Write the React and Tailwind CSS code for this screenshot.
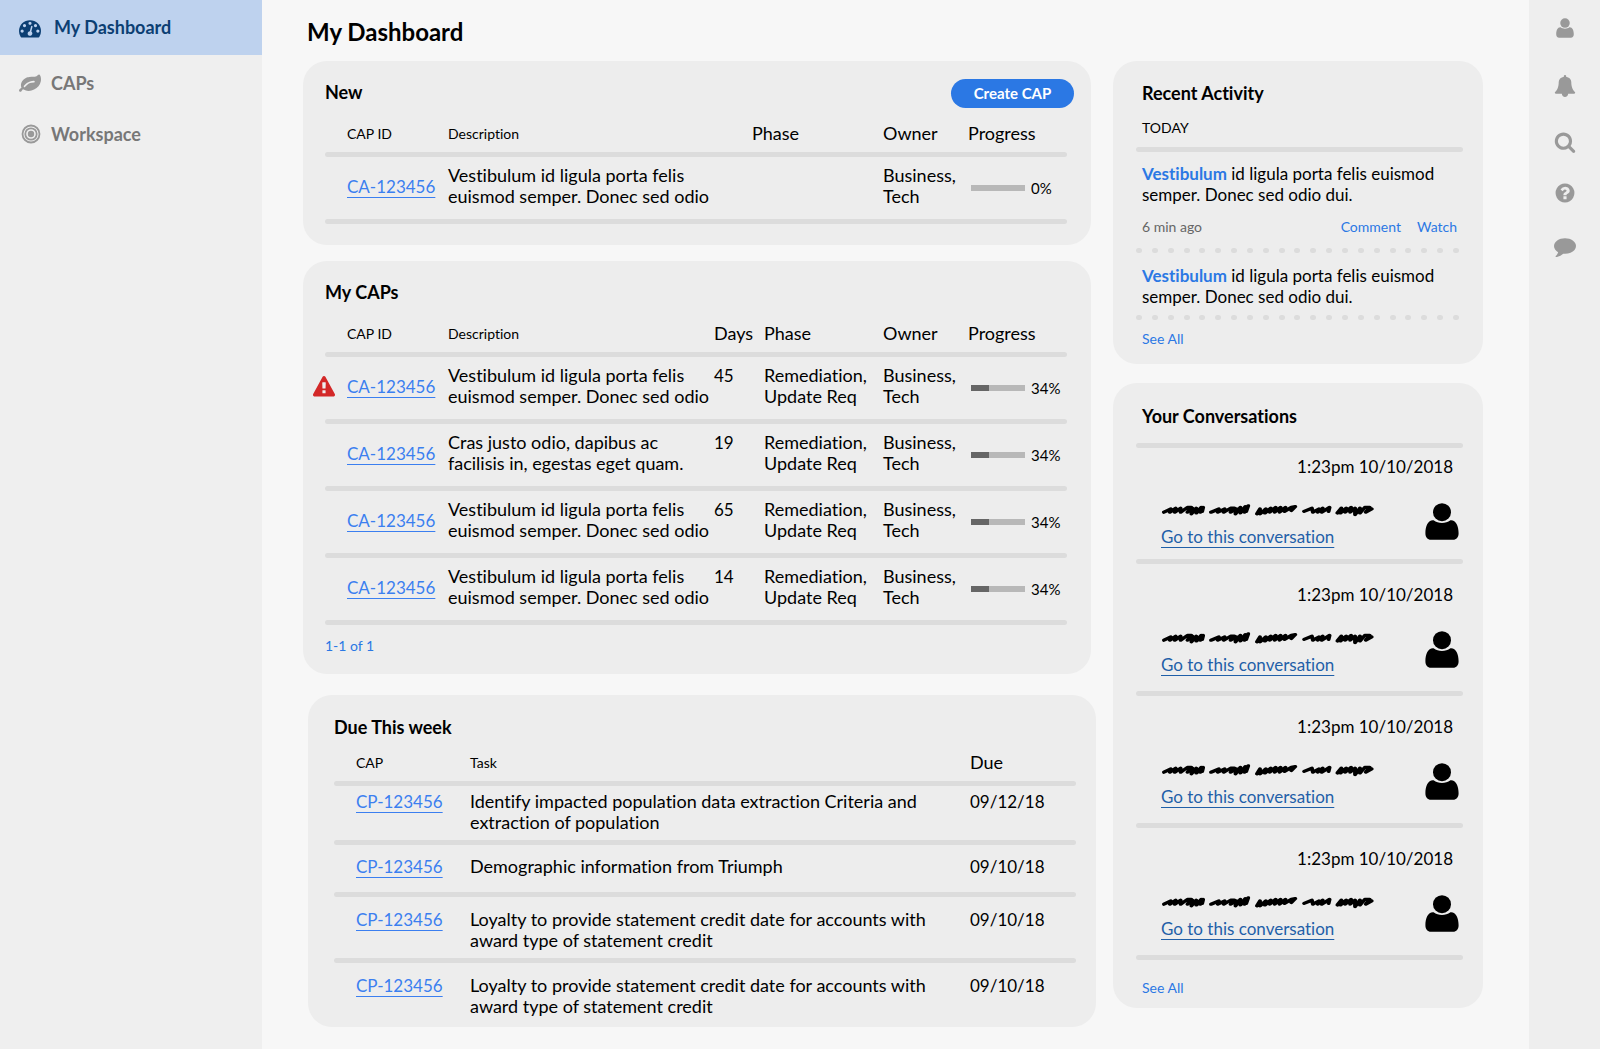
import React from 'react';

const ICONS = {
  dashboard: 'M384 1152q0-53-37.5-90.5t-90.5-37.5-90.5 37.5-37.5 90.5 37.5 90.5 90.5 37.5 90.5-37.5 37.5-90.5zm192-448q0-53-37.5-90.5t-90.5-37.5-90.5 37.5-37.5 90.5 37.5 90.5 90.5 37.5 90.5-37.5 37.5-90.5zm428 481l101-382q6-26-7.5-48.5t-38.5-29.5-48 6.5-30 39.5l-101 382q-60 5-107 43.5t-63 98.5q-20 77 20 146t117 89 146-20 89-117q16-60-6-117t-72-91zm660-33q0-53-37.5-90.5t-90.5-37.5-90.5 37.5-37.5 90.5 37.5 90.5 90.5 37.5 90.5-37.5 37.5-90.5zm-640-640q0-53-37.5-90.5t-90.5-37.5-90.5 37.5-37.5 90.5 37.5 90.5 90.5 37.5 90.5-37.5 37.5-90.5zm448 192q0-53-37.5-90.5t-90.5-37.5-90.5 37.5-37.5 90.5 37.5 90.5 90.5 37.5 90.5-37.5 37.5-90.5zm320 448q0 261-141 483-19 29-54 29h-1402q-35 0-54-29-141-221-141-483 0-182 71-348t191-286 286-191 348-71 348 71 286 191 191 286 71 348z',
  leaf: 'M1280 704q0-26-19-45t-45-19q-172 0-318 49.5t-259.5 134-235.5 219.5q-19 21-19 45 0 26 19 45t45 19q24 0 45-19 27-24 74-71t67-66q137-124 268.5-176t313.5-52q26 0 45-19t19-45zm512-198q0 95-20 193-46 224-184.5 383t-357.5 268q-214 108-438 108-148 0-286-47-15-5-88-42t-96-37q-16 0-39.5 32t-45 70-52.5 70-60 32q-43 0-63.5-17.5t-45.5-59.5q-2-4-6-11t-5.5-10-3-9.5-1.5-13.5q0-35 31-73.5t68-65.5 68-56 31-48q0-4-14-38t-16-44q-9-51-9-104 0-115 43.5-220t119-184.5 170.5-139 204-95.5q55-18 145-25.5t179.5-9 178.5-6 163.5-24 113.5-56.5l29.5-29.5 29.5-28 27-20 36.5-16 43.5-4.5q39 0 70.5 46t47.5 112 24 124 8 96z',
  bell: 'M1728 1408q0 52-38 90t-90 38h-448q0 106-75 181t-181 75-181-75-75-181h-448q-52 0-90-38t-38-90q50-42 91-88t85-119.500 74.500-158.500 50-206 19.500-260q0-152 117-282.500t307-158.500q-8-19-8-39 0-40 28-68t68-28 68 28 28 68q0 20-8 39 190 28 307 158.500t117 282.500q0 139 19.500 260t50 206 74.500 158.500 85 119.500 91 88z',
  search: 'M1216 832q0-185-131.5-316.5t-316.5-131.5-316.5 131.5-131.5 316.5 131.5 316.5 316.5 131.5 316.5-131.5 131.5-316.5zm512 832q0 52-38 90t-90 38q-54 0-90-38l-343-342q-179 124-399 124-143 0-273.5-55.5t-225-150-150-225-55.5-273.5 55.5-273.5 150-225 225-150 273.5-55.5 273.5 55.5 225 150 150 225 55.5 273.5q0 220-124 399l343 343q37 37 37 90z',
  question: 'M1024 1376v-192q0-14-9-23t-23-9h-192q-14 0-23 9t-9 23v192q0 14 9 23t23 9h192q14 0 23-9t9-23zm256-672q0-88-55.5-163t-138.5-116-170-41q-243 0-371 213-15 24 8 42l132 100q7 6 19 6 16 0 25-12 53-68 86-92 34-24 86-24 48 0 85.5 26t37.5 59q0 38-20 61t-68 45q-63 28-115.5 86.5t-52.5 125.5v36q0 14 9 23t23 9h192q14 0 23-9t9-23q0-19 21.5-49.5t54.5-49.5q32-18 49-28.5t46-35 44.5-48 28-60.5 12.5-81zm384 192q0 209-103 385.5t-279.5 279.5-385.5 103-385.5-103-279.5-279.5-103-385.5 103-385.5 279.5-279.5 385.5-103 385.5 103 279.5 279.5 103 385.5z',
  comment: 'M1792 896q0 174-120 321.5t-326 233-450 85.5q-70 0-145-8-198 175-460 242-49 14-114 22-17 2-30.5-9t-17.5-29v-1q-3-4-.5-12t2-10 4.5-9.5l6-9 7-8.5 8-9q7-8 31-34.5t34.5-38 31-39.5 32.5-51 27-59 26-76q-157-89-247.5-220t-90.5-281q0-130 71-248.5t191-204.5 286-136.5 348-50.5 348 50.5 286 136.5 191 204.5 71 248.5z',
  warning: 'M1024 1375v-190q0-14-9.5-23.5t-22.5-9.5h-192q-13 0-22.5 9.5t-9.5 23.5v190q0 14 9.5 23.5t22.5 9.5h192q13 0 22.5-9.5t9.5-23.5zm-2-374l18-459q0-12-10-19-13-11-24-11h-220q-11 0-24 11-10 7-10 21l17 457q0 10 10 16.5t24 6.5h185q14 0 23.5-6.5t10.5-16.5zm-14-934l768 1408q35 63-2 126-17 29-46.5 46t-63.5 17h-1536q-34 0-63.5-17t-46.5-46q-37-63-2-126l768-1408q17-31 47-49t65-18 65 18 47 49z',
};

const LOREM = 'Vestibulum id ligula porta felis euismod semper. Donec sed odio';

const newCaps = [
  { id: 'CA-123456', description: LOREM, phase: '', owner: ['Business,', 'Tech'], progress: 0 },
];

const myCaps = [
  { id: 'CA-123456', description: LOREM, days: 45, alert: true },
  { id: 'CA-123456', description: 'Cras justo odio, dapibus ac facilisis in, egestas eget quam.', days: 19 },
  { id: 'CA-123456', description: LOREM, days: 65 },
  { id: 'CA-123456', description: LOREM, days: 14 },
].map(c => ({ ...c, phase: ['Remediation,', 'Update Req'], owner: ['Business,', 'Tech'], progress: 34 }));

const dueTasks = [
  { id: 'CP-123456', task: 'Identify impacted population data extraction Criteria and extraction of population', due: '09/12/18', pad: 'pt-[5px] pb-[7px]' },
  { id: 'CP-123456', task: 'Demographic information from Triumph', due: '09/10/18', pad: 'pt-[11px] pb-[15px]' },
  { id: 'CP-123456', task: 'Loyalty to provide statement credit date for accounts with award type of statement credit', due: '09/10/18', pad: 'pt-[12px] pb-[7px]' },
  { id: 'CP-123456', task: 'Loyalty to provide statement credit date for accounts with award type of statement credit', due: '09/10/18', pad: 'pt-[12px]' },
];

function Icon({ name, className }) {
  return (
    <svg viewBox="0 0 1792 1792" fill="currentColor" className={className} aria-hidden="true">
      <path d={ICONS[name]} />
    </svg>
  );
}

function TargetIcon({ className }) {
  return (
    <svg viewBox="0 0 20 20" fill="none" stroke="currentColor" className={className} aria-hidden="true">
      <circle cx="10" cy="10" r="8.5" strokeWidth="1.8" />
      <circle cx="10" cy="10" r="5.7" strokeWidth="1.8" />
      <circle cx="10" cy="10" r="3.2" fill="currentColor" stroke="none" />
    </svg>
  );
}

function PersonIcon({ className }) {
  return (
    <svg viewBox="0 0 34 37" fill="currentColor" className={className} aria-hidden="true">
      <circle cx="17" cy="9.2" r="9" />
      <path d="M8.6 17.2c4.8 3.6 12 3.6 16.8 0 5.2-.6 8.2 5.4 8.2 13 0 4-2.2 6.5-5.5 6.5H5.9C2.6 36.7.4 34.2.4 30.2.4 22.6 3.4 16.6 8.6 17.2z" />
    </svg>
  );
}

// Placeholder handwriting standing in for the message preview
function Scribble() {
  return (
    <svg viewBox="0 0 216 14" fill="none" stroke="currentColor" strokeWidth="4" strokeLinecap="round" strokeLinejoin="round" className="w-[216px] h-[14px]" aria-hidden="true">
      <g transform="translate(0 2) scale(.98 .8)">
        <path d="M3 9l7-4-1 4 6-5-1 5 6-5 0 5 7-6 4 0-4 6 5-5-1 7 5-7 0 6 5-7-1 6 3-6-1 5" />
        <path d="M51 9l8-4-1 4 7-4-1 4 7-5 4 0-4 5 6-4-1 6 5-8 0 7 5-8-1 7 4-8-2 7" />
        <path d="M98 11l3-6 0 6 6-6-1 5 6-6-1 5 6-6-1 6 6-6-1 6 6-6-1 5 7-5 4-1-4 5" />
        <path d="M146 8l8-4 1 5 6-4-1 4 5-5-1 5 8-6-1 5" />
        <path d="M180 10l4-6-1 6 6-6-1 5 6-6-1 6 5-5 0 8 5-8 0 6 5-7 5 0-4 6 6-4" />
      </g>
    </svg>
  );
}

function Rule() {
  return <div className="h-[5px] rounded-full bg-[#dcdcdc]" />;
}

function RuleRow({ span }) {
  return (
    <tr aria-hidden="true">
      <td colSpan={span}><Rule /></td>
    </tr>
  );
}

function DottedRule() {
  return (
    <div className="flex justify-between pr-1" aria-hidden="true">
      {Array.from({ length: 21 }, (_, i) => (
        <span key={i} className="w-[6px] h-[5px] rounded-full bg-[#dcdcdc]" />
      ))}
    </div>
  );
}

function Card({ className = '', children }) {
  return <section className={`rounded-[24px] bg-[#ededed] ${className}`}>{children}</section>;
}

function CardTitle({ className = '', children }) {
  return <h2 className={`text-[18px] font-bold ${className}`}>{children}</h2>;
}

function CapTable({ rows, withDays }) {
  const cols = withDays ? 6 : 5;
  return (
    <table className="w-full table-fixed text-left text-[18px]">
      <colgroup>
        <col className="w-[123px]" />
        <col />
        {withDays && <col className="w-[50px]" />}
        <col className={withDays ? 'w-[119px]' : 'w-[131px]'} />
        <col className="w-[85px]" />
        <col className="w-[99px]" />
      </colgroup>
      <thead>
        <tr className="h-[29px] align-top">
          <th className="pl-[22px] text-[14px] font-normal">CAP ID</th>
          <th className="text-[14px] font-normal">Description</th>
          {withDays && <th className="font-normal">Days</th>}
          <th className="font-normal">Phase</th>
          <th className="font-normal">Owner</th>
          <th className="font-normal">Progress</th>
        </tr>
      </thead>
      <tbody>
        <RuleRow span={cols} />
        {rows.map((row, i) => (
          <React.Fragment key={i}>
            <tr className="h-[62px]">
              <td className="relative pl-[22px] pb-1 text-[17px]">
                {row.alert && <Icon name="warning" className="absolute -left-[12px] top-[19px] size-[22px] text-[#d32828]" />}
                <a href="#cap" className="text-[#3b7ff0] underline underline-offset-4">{row.id}</a>
              </td>
              <td className="pb-1">{row.description}</td>
              {withDays && <td className="pt-2 align-top text-[17px]">{row.days}</td>}
              <td className="pb-1">{row.phase && row.phase.map(p => <div key={p}>{p}</div>)}</td>
              <td className="pb-1">{row.owner.map(o => <div key={o}>{o}</div>)}</td>
              <td>
                <div className="flex items-center gap-[6px] pl-[3px] text-[15px]">
                  <div className="w-[54px] h-[6px] shrink-0 bg-[#b8b8b8]">
                    <div className="h-full bg-[#666]" style={{ width: `${row.progress}%` }} />
                  </div>
                  {row.progress}%
                </div>
              </td>
            </tr>
            <RuleRow span={cols} />
          </React.Fragment>
        ))}
      </tbody>
    </table>
  );
}

function Conversation({ first }) {
  return (
    <>
      <div className={`pl-[25px] ${first ? 'pt-2 pb-3' : 'pt-5 pb-4'}`}>
        <div className="pr-[10px] text-right">1:23pm 10/10/2018</div>
        <div className="mt-[26px] flex items-start justify-between pr-1">
          <div>
            <Scribble />
            <a href="#conversation" className="mt-[9px] block w-fit text-[#1f5fa8] underline underline-offset-4">Go to this conversation</a>
          </div>
          <PersonIcon className="w-[34px] h-[37px]" />
        </div>
      </div>
      <Rule />
    </>
  );
}

export default function App() {
  return (
    <div className="flex min-h-screen bg-[#f7f7f7] font-['Lato',sans-serif] text-[17px] leading-[21px] text-black [font-variant-ligatures:none]">
      {/* Left nav */}
      <nav className="w-[262px] shrink-0 bg-[#efefef] text-[18px] font-bold text-[#777]">
        <a href="#dashboard" className="flex h-[55px] items-center gap-[13px] bg-[#bed2ee] pl-[19px] text-[#0c3f73]">
          <Icon name="dashboard" className="size-[22px]" />
          My Dashboard
        </a>
        <a href="#caps" className="flex h-[57px] items-center gap-[10px] pl-[19px]">
          <Icon name="leaf" className="size-[22px] text-[#999]" />
          CAPs
        </a>
        <a href="#workspace" className="flex h-[44px] items-center gap-[10px] pl-[21px]">
          <TargetIcon className="size-[20px] text-[#999]" />
          Workspace
        </a>
      </nav>

      <main className="min-w-0 flex-1 pl-[41px] pr-[46px] pt-[18px]">
        <h1 className="pl-1 text-[24px] leading-[28px] font-bold">My Dashboard</h1>

        <div className="mt-[15px] grid grid-cols-[788fr_370fr] items-start gap-x-[22px]">
          <div>
            <Card className="pt-[18px] pr-[24px] pb-[21px] pl-[22px]">
              <div className="flex items-start justify-between">
                <CardTitle className="pt-[3px]">New</CardTitle>
                <button type="button" className="-mr-[7px] h-[29px] w-[123px] rounded-full bg-[#2b78e4] text-[15px] font-bold text-white">Create CAP</button>
              </div>
              <div className="mt-[15px]">
                <CapTable rows={newCaps} />
              </div>
            </Card>

            <Card className="mt-4 pt-[21px] pr-[24px] pb-[18px] pl-[22px]">
              <CardTitle className="mb-[20px]">My CAPs</CardTitle>
              <CapTable rows={myCaps} withDays />
              <a href="#page" className="mt-[10px] block w-fit text-[14px] text-[#2b78e4]">1-1 of 1</a>
            </Card>

            <Card className="mt-[21px] -mr-[5px] ml-[5px] pt-[22px] pr-[20px] pb-[10px] pl-[26px]">
              <CardTitle className="mb-[14px]">Due This week</CardTitle>
              <table className="w-full table-fixed text-left text-[18px]">
                <colgroup>
                  <col className="w-[136px]" />
                  <col />
                  <col className="w-[106px]" />
                </colgroup>
                <thead>
                  <tr className="h-[29px] align-top">
                    <th className="pl-[22px] text-[14px] font-normal">CAP</th>
                    <th className="text-[14px] font-normal">Task</th>
                    <th className="font-normal">Due</th>
                  </tr>
                </thead>
                <tbody>
                  {dueTasks.map((t, i) => (
                    <React.Fragment key={i}>
                      <RuleRow span={3} />
                      <tr className="align-top">
                        <td className={`pl-[22px] text-[17px] ${t.pad}`}>
                          <a href="#cap" className="text-[#3b7ff0] underline underline-offset-4">{t.id}</a>
                        </td>
                        <td className={t.pad}><div className="max-w-[480px]">{t.task}</div></td>
                        <td className={`text-[17px] ${t.pad}`}>{t.due}</td>
                      </tr>
                    </React.Fragment>
                  ))}
                </tbody>
              </table>
            </Card>
          </div>

          <div>
            <Card className="pt-[22px] pr-[20px] pb-[15px] pl-[23px]">
              <CardTitle className="pl-[6px]">Recent Activity</CardTitle>
              <div className="pl-[6px] pt-[13px] pb-[9px] text-[14px]">TODAY</div>
              <Rule />
              <p className="pl-[6px] pt-[11px]">
                <a href="#activity" className="font-bold text-[#2b78e4]">Vestibulum</a> id ligula porta felis euismod semper. Donec sed odio dui.
              </p>
              <div className="flex gap-4 pl-[6px] pr-[6px] pt-[11px] pb-[11px] text-[14px] text-[#2b78e4]">
                <span className="flex-1 text-[#666]">6 min ago</span>
                <a href="#comment">Comment</a>
                <a href="#watch">Watch</a>
              </div>
              <DottedRule />
              <p className="pl-[6px] pt-[12px] pb-[8px]">
                <a href="#activity" className="font-bold text-[#2b78e4]">Vestibulum</a> id ligula porta felis euismod semper. Donec sed odio dui.
              </p>
              <DottedRule />
              <a href="#activity" className="ml-[6px] mt-[8px] block w-fit text-[14px] text-[#2b78e4]">See All</a>
            </Card>

            <Card className="mt-[19px] pt-[23px] pr-[20px] pb-[10px] pl-[23px]">
              <CardTitle className="mb-[16px] pl-[6px]">Your Conversations</CardTitle>
              <Rule />
              <Conversation first />
              <Conversation />
              <Conversation />
              <Conversation />
              <a href="#conversations" className="ml-[6px] mt-[17px] block w-fit text-[14px] text-[#2b78e4]">See All</a>
            </Card>
          </div>
        </div>
      </main>

      {/* Right toolbar */}
      <aside className="flex w-[71px] shrink-0 flex-col items-center bg-[#eee] pt-[18px] text-[#999]">
        <button type="button" aria-label="Profile"><PersonIcon className="w-[18px] h-[20px]" /></button>
        <button type="button" aria-label="Notifications" className="mt-[37px]"><Icon name="bell" className="size-[22px]" /></button>
        <button type="button" aria-label="Search" className="mt-[34px]"><Icon name="search" className="size-[22px]" /></button>
        <button type="button" aria-label="Help" className="mt-[29px]"><Icon name="question" className="size-[22px]" /></button>
        <button type="button" aria-label="Messages" className="mt-[31px]"><Icon name="comment" className="size-[22px]" /></button>
      </aside>
    </div>
  );
}
